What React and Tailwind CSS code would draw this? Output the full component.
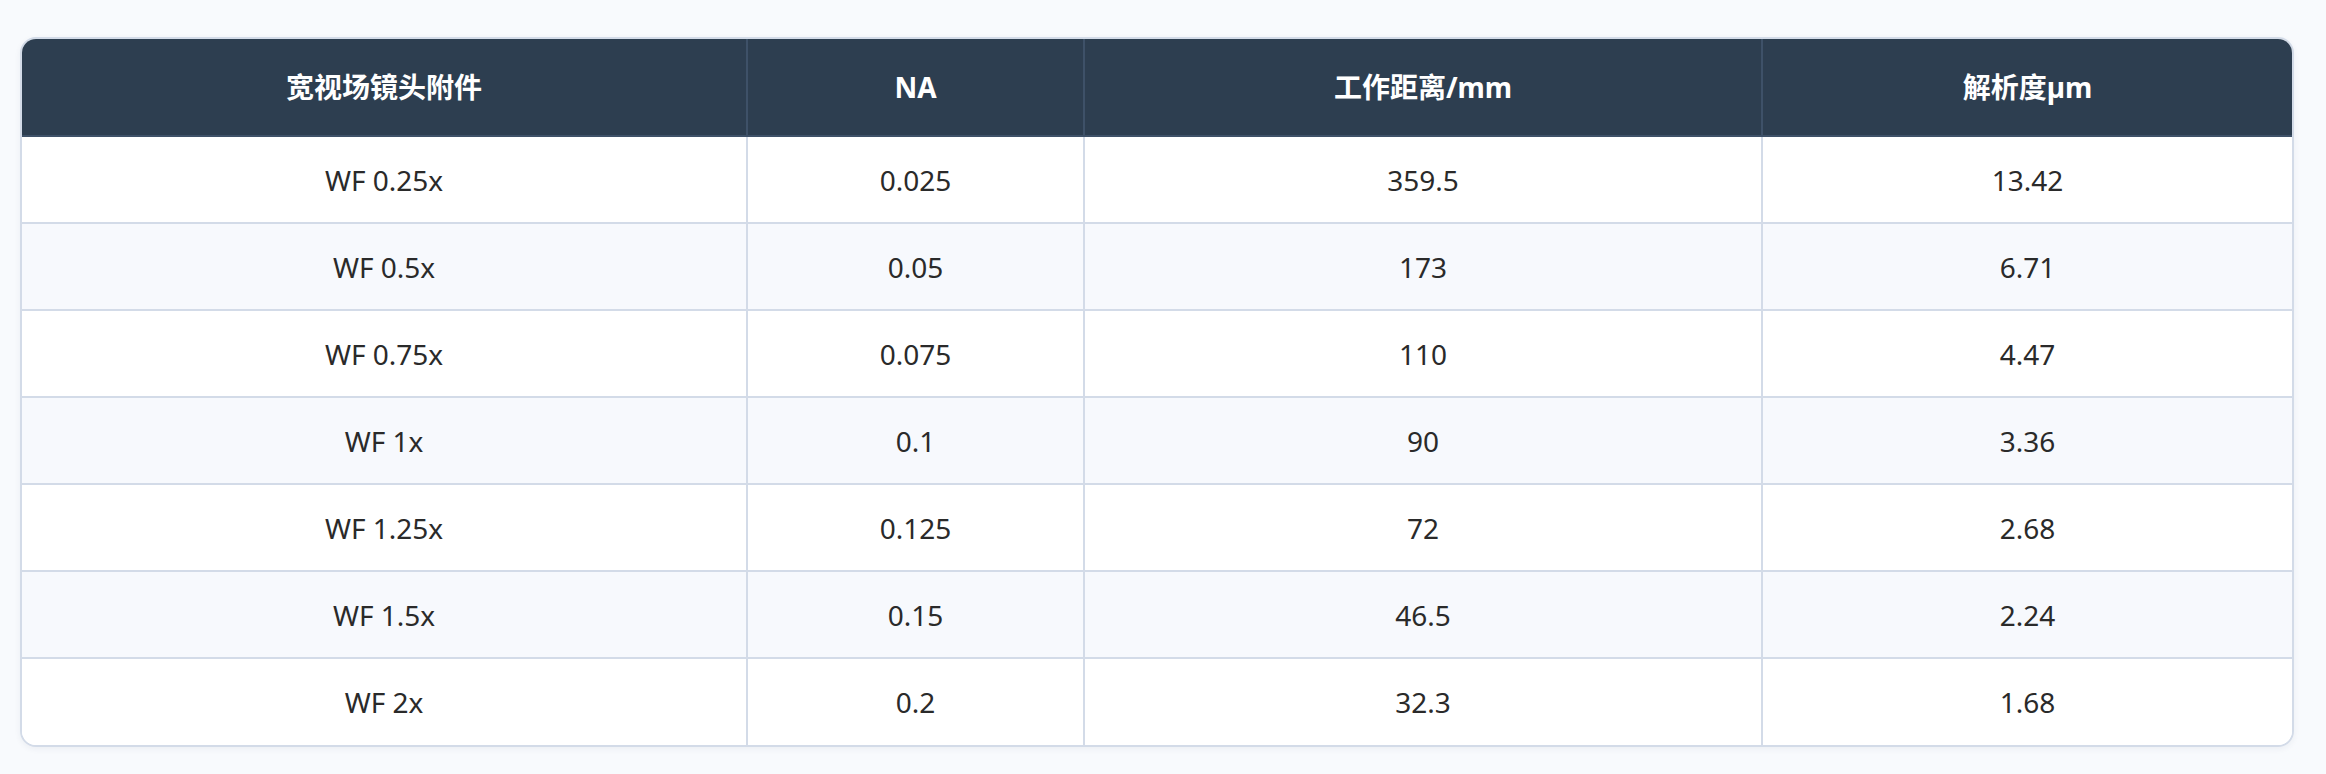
import React from "react";

const headers = ["宽视场镜头附件", "NA", "工作距离/mm", "解析度µm"];
const rows = [
  ["WF 0.25x", "0.025", "359.5", "13.42"],
  ["WF 0.5x", "0.05", "173", "6.71"],
  ["WF 0.75x", "0.075", "110", "4.47"],
  ["WF 1x", "0.1", "90", "3.36"],
  ["WF 1.25x", "0.125", "72", "2.68"],
  ["WF 1.5x", "0.15", "46.5", "2.24"],
  ["WF 2x", "0.2", "32.3", "1.68"],
];

export default function App() {
  return (
    <div
      className="min-h-[774px] w-full bg-[#f8fafd] pl-[20px] pr-[32px] pt-[37px] pb-[29px]"
      style={{ fontFamily: '"Noto Sans", "Noto Sans CJK SC", sans-serif' }}
    >
      <div className="overflow-hidden rounded-[16px] border-2 border-[#d3dbe8] bg-white shadow-[0_2px_6px_rgba(30,50,90,0.06)]">
        <table className="w-full table-fixed border-collapse">
          <colgroup>
            <col className="w-[725px]" />
            <col className="w-[337px]" />
            <col className="w-[678px]" />
            <col />
          </colgroup>
          <thead>
            <tr className="h-[97px] bg-[#2d3e50]">
              {headers.map((h, i) => (
                <th
                  key={i}
                  className={`border-b-2 border-[#3e5168] text-center text-[28px] font-bold text-white ${
                    i < 3 ? "border-r-2" : ""
                  }`}
                >
                  {h}
                </th>
              ))}
            </tr>
          </thead>
          <tbody>
            {rows.map((r, ri) => (
              <tr
                key={ri}
                className={`h-[87px] ${ri % 2 === 1 ? "bg-[#f7f9fd]" : "bg-white"}`}
              >
                {r.map((c, ci) => (
                  <td
                    key={ci}
                    className={`border-[#d3dbe8] text-center text-[28px] text-[#2a2a2a] ${
                      ri < rows.length - 1 ? "border-b-2" : ""
                    } ${ci < 3 ? "border-r-2" : ""}`}
                  >
                    {c}
                  </td>
                ))}
              </tr>
            ))}
          </tbody>
        </table>
      </div>
    </div>
  );
}
